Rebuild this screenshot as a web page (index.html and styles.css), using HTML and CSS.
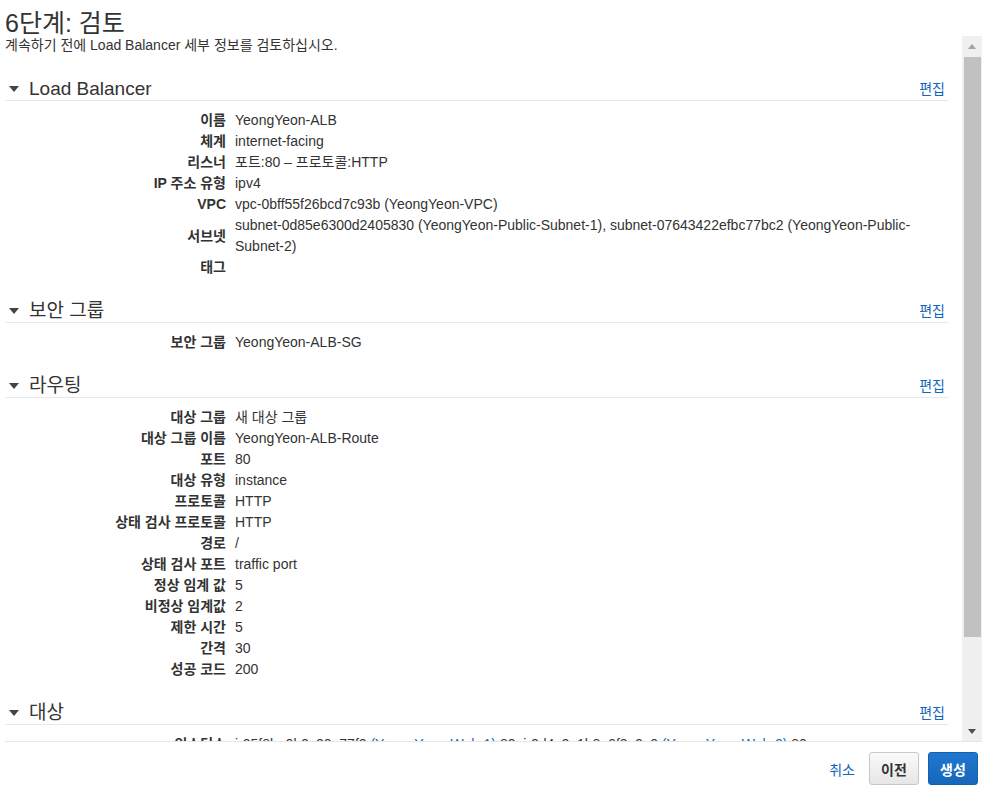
FILE: index.html
```html
<!DOCTYPE html>
<html lang="ko">
<head>
<meta charset="utf-8">
<title>6단계: 검토</title>
<link rel="stylesheet" href="styles.css">
</head>
<body>
<div class="page">
  <h1 class="title">6단계: 검토</h1>
  <div class="review">
    <div class="review-body">
      <p class="subtitle">계속하기 전에 Load Balancer 세부 정보를 검토하십시오.</p>

      <section class="sec sec-first">
        <div class="sec-head"><span class="caret"></span><h2 class="sec-title">Load Balancer</h2><a class="edit" href="#">편집</a></div>
        <dl class="rows">
          <dt>이름</dt><dd>YeongYeon-ALB</dd>
          <dt>체계</dt><dd>internet-facing</dd>
          <dt>리스너</dt><dd>포트:80 – 프로토콜:HTTP</dd>
          <dt>IP 주소 유형</dt><dd>ipv4</dd>
          <dt>VPC</dt><dd>vpc-0bff55f26bcd7c93b (YeongYeon-VPC)</dd>
          <dt class="mid">서브넷</dt><dd>subnet-0d85e6300d2405830 (YeongYeon-Public-Subnet-1), subnet-07643422efbc77bc2 (YeongYeon-Public-Subnet-2)</dd>
          <dt>태그</dt><dd></dd>
        </dl>
      </section>

      <section class="sec">
        <div class="sec-head"><span class="caret"></span><h2 class="sec-title">보안 그룹</h2><a class="edit" href="#">편집</a></div>
        <dl class="rows">
          <dt>보안 그룹</dt><dd>YeongYeon-ALB-SG</dd>
        </dl>
      </section>

      <section class="sec">
        <div class="sec-head"><span class="caret"></span><h2 class="sec-title">라우팅</h2><a class="edit" href="#">편집</a></div>
        <dl class="rows">
          <dt>대상 그룹</dt><dd>새 대상 그룹</dd>
          <dt>대상 그룹 이름</dt><dd>YeongYeon-ALB-Route</dd>
          <dt>포트</dt><dd>80</dd>
          <dt>대상 유형</dt><dd>instance</dd>
          <dt>프로토콜</dt><dd>HTTP</dd>
          <dt>상태 검사 프로토콜</dt><dd>HTTP</dd>
          <dt>경로</dt><dd>/</dd>
          <dt>상태 검사 포트</dt><dd>traffic port</dd>
          <dt>정상 임계 값</dt><dd>5</dd>
          <dt>비정상 임계값</dt><dd>2</dd>
          <dt>제한 시간</dt><dd>5</dd>
          <dt>간격</dt><dd>30</dd>
          <dt>성공 코드</dt><dd>200</dd>
        </dl>
      </section>

      <section class="sec">
        <div class="sec-head"><span class="caret"></span><h2 class="sec-title">대상</h2><a class="edit" href="#">편집</a></div>
        <dl class="rows">
          <dt>인스턴스</dt><dd>i-05f8be0b9c30a77f2 <a class="link" href="#">(YeongYeon-Web-1)</a>:80, i-0d4c2a1b8e6f3a9c0 <a class="link" href="#">(YeongYeon-Web-2)</a>:80</dd>
        </dl>
      </section>
    </div>
    <div class="scrollbar">
      <div class="sb-btn"><span class="arrow-up"></span></div>
      <div class="sb-track"><div class="sb-thumb"></div></div>
      <div class="sb-btn"><span class="arrow-down"></span></div>
    </div>
  </div>
  <div class="footer">
    <a class="cancel" href="#">취소</a>
    <button class="btn btn-prev" type="button">이전</button>
    <button class="btn btn-create" type="button">생성</button>
  </div>
</div>
</body>
</html>
```

FILE: styles.css
```css
html, body {
  margin: 0;
  padding: 0;
}

body {
  width: 987px;
  height: 801px;
  overflow: hidden;
  background: #ffffff;
  color: #333333;
  font-family: "Liberation Sans", "Noto Sans CJK KR", sans-serif;
  font-size: 14px;
}

.page {
  padding: 0 5px;
}

.title {
  margin: 0;
  height: 26px;
  padding-top: 10px;
  font-size: 25px;
  line-height: 26px;
  font-weight: normal;
  color: #333333;
}

.review {
  display: flex;
  height: 705px;
  border-bottom: 1px solid #e6e6e6;
  overflow: hidden;
}

.review-body {
  width: 943px;
  flex: 0 0 943px;
  overflow: hidden;
}

.subtitle {
  margin: 0;
  font-size: 14px;
  line-height: 18px;
}

.sec {
  margin-top: 22px;
}

.sec-first {
  margin-top: 24px;
}

.sec-head {
  display: flex;
  align-items: center;
  height: 22px;
  border-bottom: 1px solid #e8e8e8;
}

.caret {
  width: 0;
  height: 0;
  margin-left: 4px;
  margin-right: 10px;
  border-left: 5.5px solid transparent;
  border-right: 5.5px solid transparent;
  border-top: 6px solid #444444;
}

.sec-title {
  flex: 1;
  margin: 0;
  font-size: 19px;
  line-height: 22px;
  font-weight: normal;
  color: #333333;
}

.edit {
  margin-right: 3px;
  color: #1166bb;
  text-decoration: none;
  font-size: 14px;
  line-height: 22px;
}

.rows {
  display: grid;
  grid-template-columns: 221px 1fr;
  column-gap: 9px;
  margin: 0;
  padding-top: 9px;
  line-height: 21px;
}

.rows dt {
  font-weight: bold;
  text-align: right;
  white-space: nowrap;
}

.rows dt.mid {
  align-self: center;
}

.rows dd {
  margin: 0;
  min-height: 21px;
}

.link {
  color: #1166bb;
  text-decoration: none;
}

.scrollbar {
  display: flex;
  flex-direction: column;
  width: 20px;
  margin-left: 14px;
  background: #f0f0f0;
}

.sb-btn {
  height: 20px;
  display: flex;
  align-items: center;
  justify-content: center;
}

.arrow-up {
  width: 0;
  height: 0;
  border-left: 4.5px solid transparent;
  border-right: 4.5px solid transparent;
  border-bottom: 5px solid #a3a3a3;
}

.arrow-down {
  width: 0;
  height: 0;
  border-left: 4.5px solid transparent;
  border-right: 4.5px solid transparent;
  border-top: 5px solid #505050;
}

.sb-track {
  flex: 1;
  padding: 1px 1px 0 2px;
}

.sb-thumb {
  height: 580px;
  background: #c1c1c1;
}

.footer {
  display: flex;
  justify-content: flex-end;
  align-items: center;
  padding: 10px 4px 0 0;
}

.cancel {
  color: #1166bb;
  text-decoration: none;
  font-size: 14px;
  margin-right: 14px;
}

.btn {
  height: 33px;
  width: 50px;
  padding: 0;
  border-radius: 3px;
  font-family: "Liberation Sans", "Noto Sans CJK KR", sans-serif;
  font-size: 14px;
  font-weight: bold;
}

.btn-prev {
  border: 1px solid #c8c8c8;
  background: linear-gradient(#fafafa, #e6e6e6);
  color: #333333;
}

.btn-create {
  margin-left: 9px;
  border: 1px solid #135fb0;
  background: linear-gradient(#1f77d0, #1767ba);
  color: #ffffff;
}
```
